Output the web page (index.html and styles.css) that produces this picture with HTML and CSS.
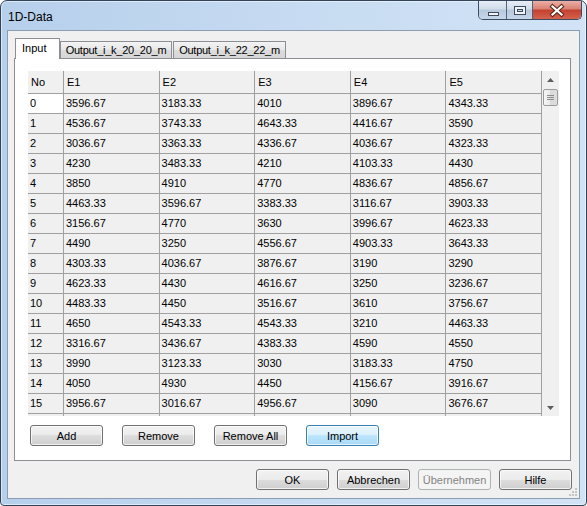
FILE: index.html
```html
<!DOCTYPE html>
<html lang="de">
<head>
  <meta charset="UTF-8">
  <title>1D-Data</title>
  <link rel="stylesheet" href="styles.css">
</head>
<body>

  <div class="window">

    <!-- Titelleiste -->
    <div class="titlebar">
      <div class="title">1D-Data</div>
      <div class="caption">
        <div class="cap-btn cap-min">
          <svg width="28" height="18" viewBox="0 0 28 18"><rect x="9.5" y="11.5" width="10" height="3" fill="#eef3f9" stroke="#3f4957"/></svg>
        </div>
        <div class="cap-btn cap-max">
          <svg width="26" height="18" viewBox="0 0 26 18"><rect x="7.5" y="5.5" width="11" height="8" fill="#eef3f9" stroke="#3f4957"/><rect x="10.5" y="8.5" width="5" height="2" fill="#c9d4e2" stroke="#3f4957"/></svg>
        </div>
        <div class="cap-btn cap-close">
          <svg width="48" height="18" viewBox="0 0 48 18"><path d="M19.5 5.5 L28.5 13.5 M28.5 5.5 L19.5 13.5" stroke="#5a2620" stroke-width="4.2" stroke-linecap="square"/><path d="M19.5 5.5 L28.5 13.5 M28.5 5.5 L19.5 13.5" stroke="#ffffff" stroke-width="2.2" stroke-linecap="square"/></svg>
        </div>
      </div>
    </div>

    <div class="client">

      <!-- Tabs -->
      <div class="tabbar">
        <div class="tab tab-active">Input</div>
        <div class="tab tab-out1">Output_i_k_20_20_m</div>
        <div class="tab tab-out2">Output_i_k_22_22_m</div>
      </div>

      <div class="pane">
        <div class="table">
          <div class="grid">
            <div class="cell head">No</div><div class="cell head">E1</div><div class="cell head">E2</div><div class="cell head">E3</div><div class="cell head">E4</div><div class="cell head">E5</div>
            <div class="cell current">0</div><div class="cell">3596.67</div><div class="cell">3183.33</div><div class="cell">4010</div><div class="cell">3896.67</div><div class="cell">4343.33</div>
            <div class="cell">1</div><div class="cell">4536.67</div><div class="cell">3743.33</div><div class="cell">4643.33</div><div class="cell">4416.67</div><div class="cell">3590</div>
            <div class="cell">2</div><div class="cell">3036.67</div><div class="cell">3363.33</div><div class="cell">4336.67</div><div class="cell">4036.67</div><div class="cell">4323.33</div>
            <div class="cell">3</div><div class="cell">4230</div><div class="cell">3483.33</div><div class="cell">4210</div><div class="cell">4103.33</div><div class="cell">4430</div>
            <div class="cell">4</div><div class="cell">3850</div><div class="cell">4910</div><div class="cell">4770</div><div class="cell">4836.67</div><div class="cell">4856.67</div>
            <div class="cell">5</div><div class="cell">4463.33</div><div class="cell">3596.67</div><div class="cell">3383.33</div><div class="cell">3116.67</div><div class="cell">3903.33</div>
            <div class="cell">6</div><div class="cell">3156.67</div><div class="cell">4770</div><div class="cell">3630</div><div class="cell">3996.67</div><div class="cell">4623.33</div>
            <div class="cell">7</div><div class="cell">4490</div><div class="cell">3250</div><div class="cell">4556.67</div><div class="cell">4903.33</div><div class="cell">3643.33</div>
            <div class="cell">8</div><div class="cell">4303.33</div><div class="cell">4036.67</div><div class="cell">3876.67</div><div class="cell">3190</div><div class="cell">3290</div>
            <div class="cell">9</div><div class="cell">4623.33</div><div class="cell">4430</div><div class="cell">4616.67</div><div class="cell">3250</div><div class="cell">3236.67</div>
            <div class="cell">10</div><div class="cell">4483.33</div><div class="cell">4450</div><div class="cell">3516.67</div><div class="cell">3610</div><div class="cell">3756.67</div>
            <div class="cell">11</div><div class="cell">4650</div><div class="cell">4543.33</div><div class="cell">4543.33</div><div class="cell">3210</div><div class="cell">4463.33</div>
            <div class="cell">12</div><div class="cell">3316.67</div><div class="cell">3436.67</div><div class="cell">4383.33</div><div class="cell">4590</div><div class="cell">4550</div>
            <div class="cell">13</div><div class="cell">3990</div><div class="cell">3123.33</div><div class="cell">3030</div><div class="cell">3183.33</div><div class="cell">4750</div>
            <div class="cell">14</div><div class="cell">4050</div><div class="cell">4930</div><div class="cell">4450</div><div class="cell">4156.67</div><div class="cell">3916.67</div>
            <div class="cell">15</div><div class="cell">3956.67</div><div class="cell">3016.67</div><div class="cell">4956.67</div><div class="cell">3090</div><div class="cell">3676.67</div>
            <div class="cell"></div><div class="cell"></div><div class="cell"></div><div class="cell"></div><div class="cell"></div><div class="cell"></div>
          </div>

          <!-- Scrollbar -->
          <div class="vscroll">
            <div class="sb-arrow">
              <svg width="7" height="4" viewBox="0 0 7 4"><path d="M0 4 L3.5 0 L7 4 Z" fill="#5e5e5e"/></svg>
            </div>
            <div class="sb-thumb">
              <svg width="7" height="7" viewBox="0 0 7 7"><path d="M0 1.5 H7 M0 3.5 H7 M0 5.5 H7" stroke="#8c8c8c" stroke-width="1"/></svg>
            </div>
            <div class="sb-track"></div>
            <div class="sb-arrow">
              <svg width="7" height="4" viewBox="0 0 7 4"><path d="M0 0 L3.5 4 L7 0 Z" fill="#5e5e5e"/></svg>
            </div>
          </div>
        </div>

        <div class="actions">
          <button class="btn">Add</button>
          <button class="btn">Remove</button>
          <button class="btn">Remove All</button>
          <button class="btn btn-focus">Import</button>
        </div>
      </div>

      <div class="footer">
        <button class="btn">OK</button>
        <button class="btn">Abbrechen</button>
        <button class="btn btn-disabled">Übernehmen</button>
        <button class="btn">Hilfe</button>
      </div>

      <svg class="grip" width="9" height="9" viewBox="0 0 9 9">
        <rect x="6" y="0" width="2" height="2" fill="#c4c4c4"/>
        <rect x="3" y="3" width="2" height="2" fill="#c4c4c4"/>
        <rect x="6" y="3" width="2" height="2" fill="#c4c4c4"/>
        <rect x="0" y="6" width="2" height="2" fill="#c4c4c4"/>
        <rect x="3" y="6" width="2" height="2" fill="#c4c4c4"/>
        <rect x="6" y="6" width="2" height="2" fill="#c4c4c4"/>
      </svg>
    </div>

  </div>

</body>
</html>
```

FILE: styles.css
```css
* { margin: 0; padding: 0; box-sizing: border-box; }
body {
  width: 587px;
  height: 506px;
  overflow: hidden;
  background: #ffffff;
  font-family: "Liberation Sans", Arial, sans-serif;
  font-size: 11px;
  color: #000;
}
/* Fensterrahmen */
.window {
  width: 587px;
  height: 506px;
  border: 1px solid #33445a;
  border-radius: 7px 7px 4px 4px;
  background: linear-gradient(to right, #b6cfeb, #c5daf1 45%, #d2e3f6);
  box-shadow: inset 0 0 0 1px rgba(255, 255, 255, 0.5);
  padding-bottom: 6px;
  display: flex;
  flex-direction: column;
}
.titlebar {
  height: 29px;
  display: flex;
  align-items: flex-start;
}
.title {
  padding: 9px 0 0 7px;
  font-size: 12px;
  line-height: 14px;
}
.caption {
  margin-left: auto;
  margin-right: 4px;
  display: flex;
  height: 19px;
  border: 1px solid #3d4c61;
  border-top: none;
  border-radius: 0 0 5px 5px;
  overflow: hidden;
}
.cap-btn svg { display: block; }
.cap-min {
  width: 28px;
  border-right: 1px solid #51647c;
  background: linear-gradient(#e6edf6, #d1dcea 45%, #b7c8dd 50%, #c6d6ea);
}
.cap-max {
  width: 26px;
  border-right: 1px solid #51647c;
  background: linear-gradient(#e6edf6, #d1dcea 45%, #b7c8dd 50%, #c6d6ea);
}
.cap-close {
  width: 48px;
  background: linear-gradient(#eab0a6, #da8072 45%, #c4402f 50%, #d4634f);
}
/* Client-Bereich */
.client {
  flex: 1;
  margin: 0 6px;
  position: relative;
  background: #f0f0f0;
  border: 1px solid #8c9db2;
  padding: 7px 7px 8px 6px;
  display: flex;
  flex-direction: column;
}
.tabbar {
  height: 20px;
  display: flex;
  align-items: flex-end;
  padding-left: 1px;
}
.tab {
  height: 17px;
  border: 1px solid #8c8e94;
  border-bottom: none;
  background: linear-gradient(#f3f3f3, #e7e7e7 50%, #dcdcdc 50%, #d6d6d6);
  text-align: center;
  padding-top: 2px;
  line-height: 13px;
  white-space: nowrap;
}
.tab-active {
  width: 45px;
  height: 21px;
  margin-bottom: -1px;
  position: relative;
  z-index: 1;
  background: #ffffff;
  text-align: left;
  padding: 3px 0 0 6px;
}
.tab-out1, .tab-out2 { letter-spacing: -0.25px; }
.tab-out1 { width: 112px; }
.tab-out2 { width: 113px; margin-left: 1px; }
.pane {
  height: 403px;
  margin-right: 1px;
  border: 1px solid #8c8e94;
  background: #ffffff;
  padding: 12px 11px 14px 13px;
  display: flex;
  flex-direction: column;
}
/* Tabelle */
.table {
  display: flex;
  height: 345px;
}
.grid {
  width: 514px;
  height: 345px;
  overflow: hidden;
  display: grid;
  grid-template-columns: 36px repeat(5, 1fr);
  grid-template-rows: 23px;
  grid-auto-rows: 20px;
  align-content: start;
}
.cell {
  border-right: 1px solid #a0a0a0;
  border-bottom: 1px solid #a0a0a0;
  background: #f0f0f0;
  padding-left: 2px;
  line-height: 19px;
  white-space: nowrap;
  overflow: hidden;
}
.head {
  padding-left: 3px;
  line-height: 22px;
}
.current { background: #ffffff; }
.vscroll {
  width: 17px;
  background: #f0f0f0;
  display: flex;
  flex-direction: column;
}
.sb-arrow {
  height: 17px;
  display: flex;
  align-items: center;
  justify-content: center;
}
.sb-arrow svg, .sb-thumb svg { display: block; }
.sb-thumb {
  height: 17px;
  margin: 1px 1px 0;
  border: 1px solid #9b9b9b;
  border-radius: 2px;
  background: linear-gradient(to right, #f6f6f6, #e9e9e9 50%, #dadada 50%, #dedede);
  display: flex;
  align-items: center;
  justify-content: center;
}
.sb-track { flex: 1; }
/* Buttons */
.actions {
  display: flex;
  gap: 19px;
  margin-top: 9px;
  padding-left: 2px;
}
.btn {
  width: 73px;
  height: 21px;
  border: 1px solid #707070;
  border-radius: 3px;
  background: linear-gradient(#f2f2f2, #ebebeb 50%, #dddddd 50%, #cfcfcf);
  box-shadow: inset 0 0 0 1px rgba(255, 255, 255, 0.7);
  font-family: inherit;
  font-size: 11px;
  color: #000;
  padding: 0;
  display: flex;
  align-items: center;
  justify-content: center;
}
.btn-focus {
  border-color: #3c7fb1;
  background: linear-gradient(#eaf6fd, #d9f0fc 50%, #bee6fd 50%, #a7d9f5);
}
.btn-disabled {
  border-color: #adb2b5;
  background: #f4f4f4;
  box-shadow: none;
  color: #838383;
}
.footer {
  display: flex;
  justify-content: flex-end;
  gap: 8px;
  margin-top: 8px;
}
.grip {
  position: absolute;
  right: 1px;
  bottom: 1px;
}
```
